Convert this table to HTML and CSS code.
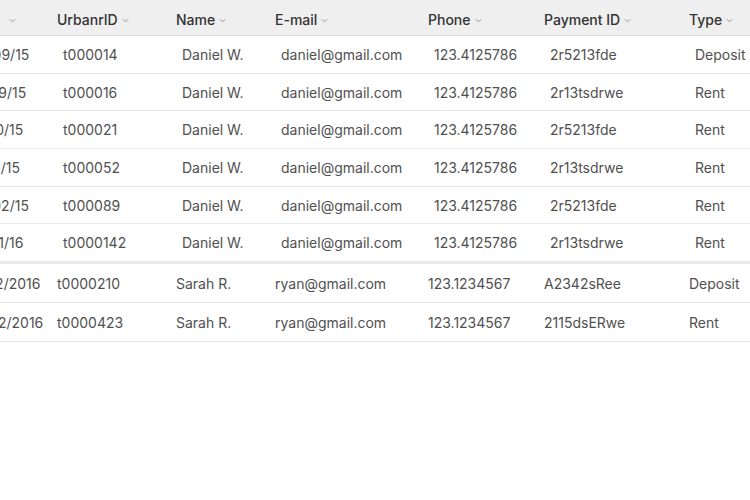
FILE: index.html
```html
<!DOCTYPE html>
<html lang="en">
<head>
<meta charset="UTF-8">
<title>Payments</title>
<link rel="stylesheet" href="styles.css">
</head>
<body>

<div class="sheet">
    <div class="table">
        <div class="table-head">
            <div class="cell cell-date">Date <svg class="chevron" viewBox="0 0 8 5"><path d="M1 1l3 3 3-3"/></svg></div>
            <div class="cell">UrbanrID <svg class="chevron" viewBox="0 0 8 5"><path d="M1 1l3 3 3-3"/></svg></div>
            <div class="cell">Name <svg class="chevron" viewBox="0 0 8 5"><path d="M1 1l3 3 3-3"/></svg></div>
            <div class="cell">E-mail <svg class="chevron" viewBox="0 0 8 5"><path d="M1 1l3 3 3-3"/></svg></div>
            <div class="cell">Phone <svg class="chevron" viewBox="0 0 8 5"><path d="M1 1l3 3 3-3"/></svg></div>
            <div class="cell">Payment ID <svg class="chevron" viewBox="0 0 8 5"><path d="M1 1l3 3 3-3"/></svg></div>
            <div class="cell">Type <svg class="chevron" viewBox="0 0 8 5"><path d="M1 1l3 3 3-3"/></svg></div>
        </div>

        <!-- older rows, pasted in slightly offset -->
        <div class="block block-old">
            <div class="row">
                <div class="cell">10/09/15</div><div class="cell">t000014</div><div class="cell">Daniel W.</div><div class="cell">daniel@gmail.com</div><div class="cell">123.4125786</div><div class="cell">2r5213fde</div><div class="cell">Deposit</div>
            </div>
            <div class="row">
                <div class="cell">10/19/15</div><div class="cell">t000016</div><div class="cell">Daniel W.</div><div class="cell">daniel@gmail.com</div><div class="cell">123.4125786</div><div class="cell">2r13tsdrwe</div><div class="cell">Rent</div>
            </div>
            <div class="row">
                <div class="cell">11/10/15</div><div class="cell">t000021</div><div class="cell">Daniel W.</div><div class="cell">daniel@gmail.com</div><div class="cell">123.4125786</div><div class="cell">2r5213fde</div><div class="cell">Rent</div>
            </div>
            <div class="row">
                <div class="cell">11/11/15</div><div class="cell">t000052</div><div class="cell">Daniel W.</div><div class="cell">daniel@gmail.com</div><div class="cell">123.4125786</div><div class="cell">2r13tsdrwe</div><div class="cell">Rent</div>
            </div>
            <div class="row">
                <div class="cell">12/02/15</div><div class="cell">t000089</div><div class="cell">Daniel W.</div><div class="cell">daniel@gmail.com</div><div class="cell">123.4125786</div><div class="cell">2r5213fde</div><div class="cell">Rent</div>
            </div>
            <div class="row">
                <div class="cell">01/11/16</div><div class="cell">t0000142</div><div class="cell">Daniel W.</div><div class="cell">daniel@gmail.com</div><div class="cell">123.4125786</div><div class="cell">2r13tsdrwe</div><div class="cell">Rent</div>
            </div>
        </div>

        <div class="block block-new">
            <div class="row">
                <div class="cell">01/22/2016</div><div class="cell">t0000210</div><div class="cell">Sarah R.</div><div class="cell">ryan@gmail.com</div><div class="cell">123.1234567</div><div class="cell">A2342sRee</div><div class="cell">Deposit</div>
            </div>
            <div class="row">
                <div class="cell">02/22/2016</div><div class="cell">t0000423</div><div class="cell">Sarah R.</div><div class="cell">ryan@gmail.com</div><div class="cell">123.1234567</div><div class="cell">2115dsERwe</div><div class="cell">Rent</div>
            </div>
        </div>
    </div>
</div>

</body>
</html>
```

FILE: styles.css
```css
body {
    margin: 0;
    padding: 0;
    background-color: #fff;
    font-family: Inter, "Open Sans", sans-serif;
    font-size: 14px;
    color: #505050;
}
.sheet {
    width: 750px;
    height: 500px;
    overflow: hidden;
}
.table {
    margin-left: -33px;
    width: 793px;
}
.table-head,
.row {
    display: grid;
    grid-template-columns: 90px 119px 99px 153px 116px 145px 1fr;
    align-items: center;
}
.table-head {
    height: 36px;
    padding-top: 3px;
    box-sizing: border-box;
    background-color: #efefef;
    border-bottom: 1px solid #dcdcdc;
    color: #333;
    font-weight: 500;
}
.table-head .cell {
    display: flex;
    align-items: center;
    gap: 4px;
}
.table-head .cell-date {
    gap: 11px;
}
.chevron {
    width: 7px;
    height: 5px;
    margin-top: 2px;
    fill: none;
    stroke: #8a8a8a;
    stroke-width: 1;
}
.cell {
    white-space: nowrap;
}
.block-old {
    margin-left: 6px;
}
.block-old .row {
    height: 37.7px;
    border-bottom: 1px solid #e8e8e8;
    box-sizing: border-box;
}
.block-new {
    border-top: 2px solid #ececec;
}
.block-new .row {
    height: 39px;
    border-bottom: 1px solid #e8e8e8;
    box-sizing: border-box;
}
```
